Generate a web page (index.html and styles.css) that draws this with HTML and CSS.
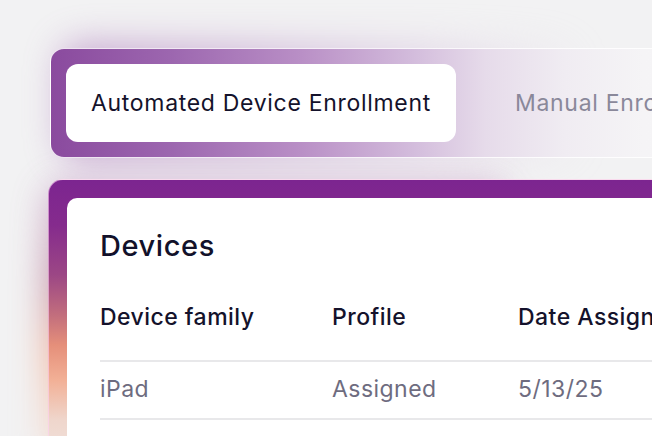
FILE: index.html
```html
<!DOCTYPE html>
<html lang="en">
<head>
<meta charset="utf-8">
<title>Device Enrollment</title>
<link rel="stylesheet" href="styles.css">
</head>
<body>
<main class="stage">
  <nav class="tabs">
    <div class="tab tab-active">Automated Device Enrollment</div>
    <div class="tab">Manual Enrollment</div>
  </nav>
  <section class="card">
    <div class="panel">
      <h1 class="title">Devices</h1>
      <div class="row row-head">
        <div class="cell c1">Device family</div>
        <div class="cell c2">Profile</div>
        <div class="cell c3">Date Assigned</div>
      </div>
      <div class="row row-data">
        <div class="cell c1">iPad</div>
        <div class="cell c2">Assigned</div>
        <div class="cell c3">5/13/25</div>
      </div>
    </div>
  </section>
</main>
</body>
</html>
```
FILE: styles.css
```css
html, body {
  margin: 0;
  padding: 0;
}
body {
  background: #f2f2f3;
  width: 652px;
  height: 436px;
  overflow: hidden;
  font-family: "Inter", "Liberation Sans", sans-serif;
}
.stage {
  padding: 48px 0 0 50px;
  isolation: isolate;
}
.tabs {
  position: relative;
  width: 660px;
  height: 110px;
  box-sizing: border-box;
  padding: 15px;
  border: 1px solid rgba(255, 255, 255, 0.85);
  border-radius: 14px;
  display: flex;
  align-items: stretch;
  gap: 34px;
  background: linear-gradient(90deg, #8a4a9e 0%, #9c66af 18%, #b98fc6 38%, #d3bcdc 55%, #e6dbea 66%, #f0ecf2 78%, #f5f4f6 90%, #f6f6f7 100%);
}
.tabs::before {
  content: "";
  position: absolute;
  inset: -6px 120px -4px 10px;
  border-radius: 20px;
  background: linear-gradient(90deg, #9a5aab 0%, #b488c2 35%, #d8c6df 70%, rgba(240,238,242,0) 100%);
  filter: blur(18px);
  opacity: 0.5;
  z-index: -1;
}
.tab {
  flex-shrink: 0;
  display: flex;
  align-items: center;
  padding: 0 25px;
  font-size: 23px;
  letter-spacing: 0.03em;
  color: #8a889a;
  white-space: nowrap;
  border-radius: 12px;
}
.tab-active {
  background: #ffffff;
  color: #14122b;
  width: 390px;
  box-sizing: border-box;
}
.card {
  position: relative;
  margin: 21px 0 0 -2px;
  width: 660px;
  height: 290px;
  box-sizing: border-box;
  padding: 18px 0 0 18px;
  border: 1px solid rgba(255, 210, 245, 0.6);
  border-radius: 15px;
  background: linear-gradient(180deg, #7c2590 0px, #852b8d 45px, #9c4785 95px, #c26e7d 135px, #e58f7a 165px, #f2b096 200px, #efd6cc 240px, #f1e6e2 290px);
}
.card::before {
  content: "";
  position: absolute;
  inset: 0 200px 0 -6px;
  border-radius: 18px;
  background: linear-gradient(180deg, rgba(150,70,160,0.4) 0px, #b06a8a 100px, #f09a78 170px, #f4c2ac 230px, #f3e2da 290px);
  filter: blur(16px);
  opacity: 0.6;
  z-index: -1;
}
.panel {
  height: 100%;
  background: #ffffff;
  border-radius: 10px 0 0 0;
  padding: 30px 0 0 33px;
  box-sizing: border-box;
}
.title {
  margin: 0;
  font-size: 29px;
  line-height: 36px;
  font-weight: 500;
  letter-spacing: 0.02em;
  color: #12112a;
}
.row {
  display: flex;
  font-size: 23px;
  line-height: 26px;
  letter-spacing: 0.02em;
}
.row-head {
  margin-top: 40px;
  padding-bottom: 30px;
  color: #14122b;
  font-weight: 500;
  border-bottom: 2px solid #e8e8ea;
}
.row-data {
  padding: 14px 0 16px;
  color: #6e6c7f;
  border-bottom: 2px solid #e8e8ea;
}
.cell {
  flex-shrink: 0;
  white-space: nowrap;
}
.c1 { width: 232px; }
.c2 { width: 186px; }
.c3 { width: 200px; }
```
